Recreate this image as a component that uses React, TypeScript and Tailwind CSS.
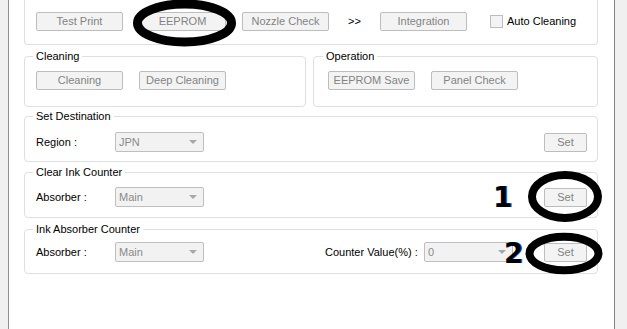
import React from "react";

const Btn = ({ label, w = "w-[87px]", className = "" }: { label: string; w?: string; className?: string }) => (
  <div
    className={`${w} h-[19px] shrink-0 flex items-center justify-center border border-[#bdbdbd] rounded-[2px] bg-[#f3f3f3] text-[#838383] text-[11px] leading-none ${className}`}
  >
    {label}
  </div>
);

const Combo = ({ value, className = "" }: { value: string; className?: string }) => (
  <div
    className={`w-[89px] h-[20px] shrink-0 flex items-center justify-between pl-[3px] pr-[5px] border border-[#bfbfbf] rounded-[2px] bg-[#f2f2f2] text-[#8a8a8a] text-[11px] leading-none ${className}`}
  >
    <span>{value}</span>
    <span className="w-0 h-0 border-l-[4px] border-r-[4px] border-t-[4px] border-l-transparent border-r-transparent border-t-[#a8a8a8] mr-[1px]" />
  </div>
);

const Group = ({
  title,
  className = "",
  children,
}: {
  title: string;
  className?: string;
  children: React.ReactNode;
}) => (
  <fieldset className={`border border-[#dcdfe3] rounded-[4px] pl-[8px] m-0 min-w-0 ${className}`}>
    <legend className="px-[3px] text-[11px] leading-[14px] text-black">{title}</legend>
    {children}
  </fieldset>
);

export default function App() {
  return (
    <div className="relative w-[627px] h-[329px] flex overflow-hidden font-['Liberation_Sans',sans-serif] bg-white">
      <div className="w-[8px] bg-[#f0f0f0]" />
      <div className="w-[1px] bg-[#8f8f8f]" />
      <div className="flex-1 bg-white pl-[15px] pr-[16px] flex flex-col">
        {/* top group (top edge scrolled away) */}
        <div className="h-[45px] border-x border-b border-[#dcdfe3] rounded-b-[4px] pl-[11px] pt-[12px] flex items-start">
          <Btn label="Test Print" />
          <Btn label="EEPROM" className="ml-[16px]" />
          <Btn label="Nozzle Check" className="ml-[16px]" />
          <span className="ml-[19px] w-[15px] h-[19px] flex items-center text-[11px] leading-none text-black">&gt;&gt;</span>
          <Btn label="Integration" className="ml-[17px]" />
          <div className="ml-[23px] h-[19px] flex items-center">
            <span className="w-[13px] h-[13px] border border-[#bcbcbc] bg-[#f3f3f3]" />
            <span className="ml-[4px] text-[11px] leading-none text-black">Auto Cleaning</span>
          </div>
        </div>

        <div className="mt-[4px] flex gap-[7px]">
          <Group title="Cleaning" className="w-[282px] pb-[16px]">
            <div className="pl-[3px] pt-[8px] flex">
              <Btn label="Cleaning" />
              <Btn label="Deep Cleaning" className="ml-[16px]" />
            </div>
          </Group>
          <Group title="Operation" className="flex-1 !pl-[9px] pb-[16px]">
            <div className="pl-[5px] pt-[8px] flex">
              <Btn label="EEPROM Save" />
              <Btn label="Panel Check" className="ml-[16px]" />
            </div>
          </Group>
        </div>

        <Group title="Set Destination" className="mt-[2px] pr-[10px] pb-[9px]">
          <div className="pl-[3px] pt-[9px] flex items-center">
            <span className="w-[79px] text-[11px] leading-none text-black">Region :</span>
            <Combo value="JPN" />
            <Btn label="Set" w="w-[43px]" className="ml-auto" />
          </div>
        </Group>

        <Group title="Clear Ink Counter" className="mt-[3px] pr-[10px] pb-[10px]">
          <div className="pl-[3px] pt-[8px] flex items-center">
            <span className="w-[79px] text-[11px] leading-none text-black">Absorber :</span>
            <Combo value="Main" />
            <Btn label="Set" w="w-[43px]" className="ml-auto" />
          </div>
        </Group>

        <Group title="Ink Absorber Counter" className="mt-[4px] pr-[10px] pb-[11px]">
          <div className="pl-[3px] pt-[6px] flex items-center">
            <span className="w-[79px] text-[11px] leading-none text-black">Absorber :</span>
            <Combo value="Main" />
            <span className="ml-auto w-[99px] text-[11px] leading-none text-black">Counter Value(%) :</span>
            <Combo value="0" />
            <Btn label="Set" w="w-[43px]" className="ml-[31px]" />
          </div>
        </Group>
      </div>
      <div className="w-[1px] bg-[#828282]" />
      <div className="w-[12px] bg-[#f0f0f0]" />

      {/* annotations */}
      <svg className="absolute inset-0 pointer-events-none" width="627" height="329" viewBox="0 0 627 329">
        <ellipse cx="184.5" cy="23" rx="47" ry="19" fill="none" stroke="#000" strokeWidth="9" />
        <ellipse cx="565" cy="196.5" rx="33" ry="21.5" fill="none" stroke="#000" strokeWidth="8" />
        <ellipse cx="564" cy="253.5" rx="34.5" ry="16.7" fill="none" stroke="#000" strokeWidth="8" />
      </svg>
      <span className="absolute left-[493px] top-[184px] text-[28px] leading-none font-bold text-black font-['DejaVu_Sans',sans-serif] [text-shadow:1px_0_0_#1d6fd8]">
        1
      </span>
      <span className="absolute left-[504px] top-[240px] text-[28px] leading-none font-bold text-black font-['DejaVu_Sans',sans-serif] [text-shadow:1px_0_0_#1d6fd8]">
        2
      </span>
    </div>
  );
}
